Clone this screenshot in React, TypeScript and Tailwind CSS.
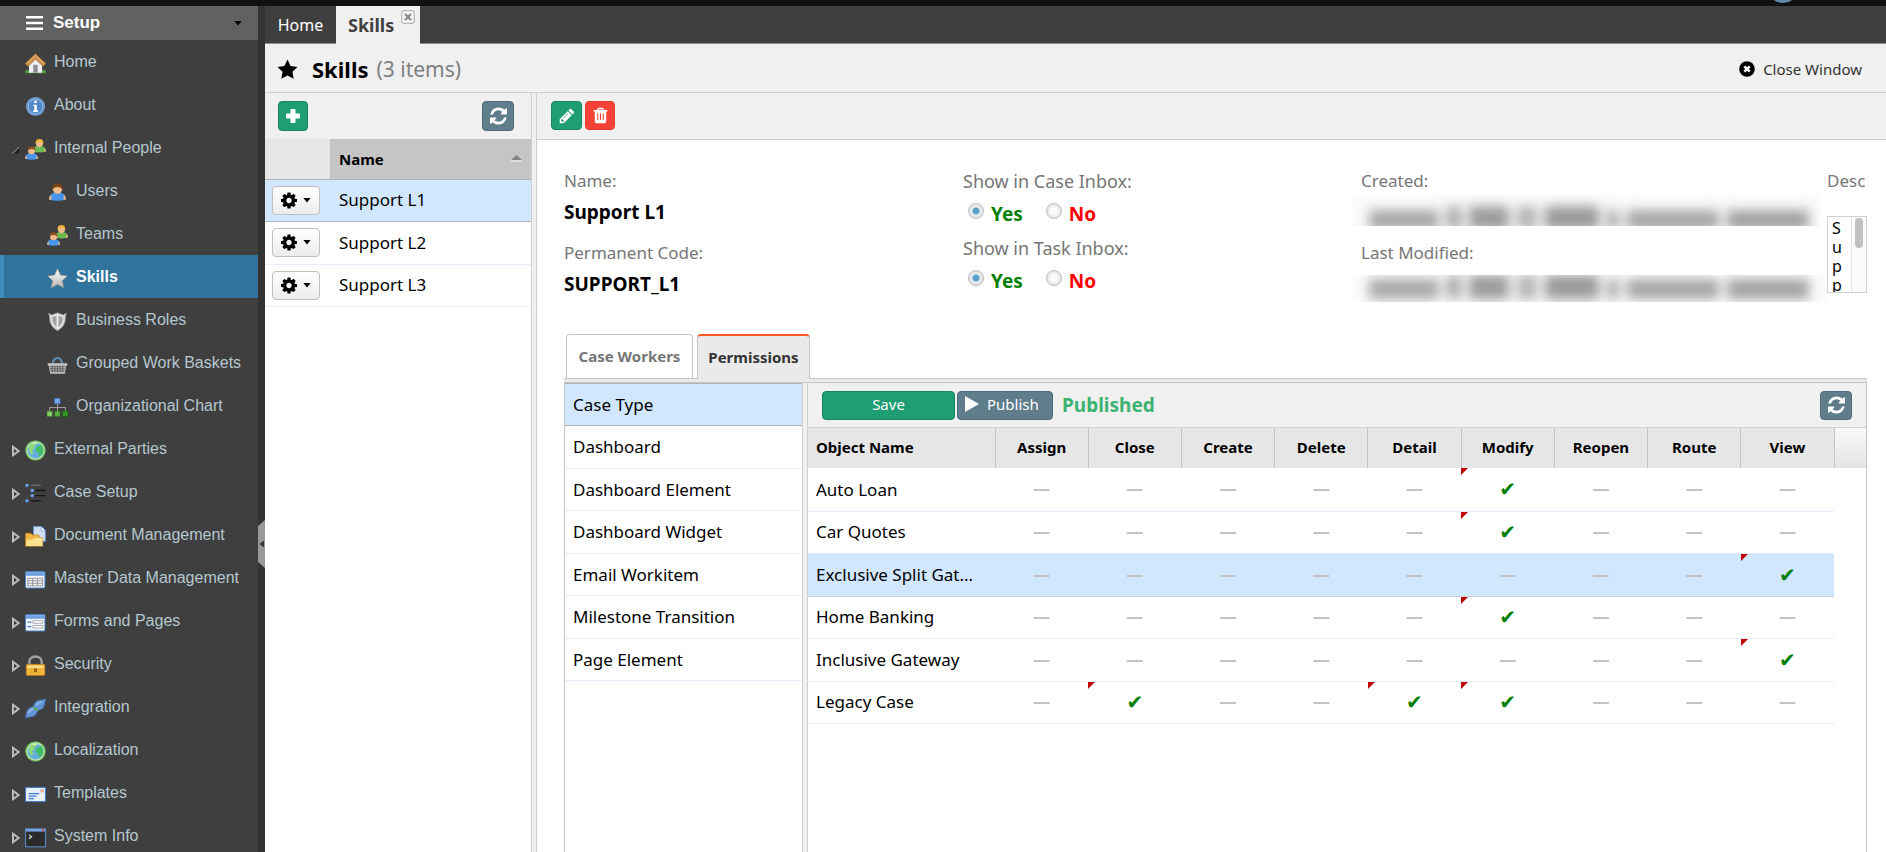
import type { ReactNode } from 'react';
import clsx from 'clsx';

type IconProps = { className?: string };

/* ---------- glyph icons ---------- */

const RefreshIcon = ({ className }: IconProps) => (
  <svg viewBox="0 0 1536 1792" className={className} fill="currentColor" aria-hidden="true">
    <path d="M1511 1056q0 5-1 7-64 268-268 434.500t-478 166.500q-146 0-282.500-55t-243.500-157l-129 129q-19 19-45 19t-45-19-19-45v-448q0-26 19-45t45-19h448q26 0 45 19t19 45-19 45l-137 137q71 66 161 102t187 36q134 0 250-65t186-179q11-17 53-117 8-23 30-23h192q13 0 22.500 9.500t9.500 22.500zM1536 256v448q0 26-19 45t-45 19h-448q-26 0-45-19t-19-45 19-45l138-138q-148-137-349-137-134 0-250 65t-186 179q-11 17-53 117-8 23-30 23h-199q-13 0-22.500-9.500t-9.500-22.500v-7q65-268 270-434.500t480-166.500q146 0 284 55.500t245 156.500l130-129q19-19 45-19t45 19 19 45z" />
  </svg>
);

const CogIcon = ({ className }: IconProps) => (
  <svg viewBox="0 0 1536 1792" className={className} fill="currentColor" aria-hidden="true">
    <path d="M1024 896q0-106-75-181t-181-75-181 75-75 181 75 181 181 75 181-75 75-181zm512-109v222q0 12-8 23t-20 13l-185 28q-19 54-39 91 35 50 107 138 10 12 10 25t-9 23q-27 37-99 108t-94 71q-12 0-26-9l-138-108q-44 23-91 38-16 136-29 186-7 28-36 28h-222q-14 0-24.500-8.500t-11.500-21.500l-28-184q-49-16-90-37l-141 107q-10 9-25 9-14 0-25-11-126-114-165-168-7-10-7-23 0-12 8-23 15-21 51-66.500t54-70.500q-27-50-41-99l-183-27q-13-2-21-12.500t-8-23.500v-222q0-12 8-23t19-13l186-28q14-46 39-92-40-57-107-138-10-12-10-24 0-10 9-23 26-36 98.500-107.500t94.500-71.500q13 0 26 10l138 107q44-23 91-38 16-136 29-186 7-28 36-28h222q14 0 24.500 8.500t11.500 21.500l28 184q49 16 90 37l142-107q9-9 24-9 13 0 25 10 129 119 165 170 7 8 7 22 0 12-8 23-15 21-51 66.500t-54 70.500q26 50 41 98l183 28q13 2 21 12.500t8 23.500z" />
  </svg>
);

const StarIcon = ({ className }: IconProps) => (
  <svg viewBox="0 0 20 20" className={className} fill="currentColor" aria-hidden="true">
    <path d="M10 .5l2.900 6.100 6.600.9-4.800 4.700 1.200 6.700L10 15.700l-5.900 3.200 1.200-6.700L.5 7.500l6.600-.9z" />
  </svg>
);

const PlusIcon = ({ className }: IconProps) => (
  <svg viewBox="0 0 16 16" className={className} fill="currentColor" aria-hidden="true">
    <path d="M6.200 1h3.600q.7 0 .7.700v3.800h3.800q.7 0 .7.700v3.600q0 .7-.7.700h-3.800v3.800q0 .7-.7.700H6.200q-.7 0-.7-.7v-3.800H1.700q-.7 0-.7-.7V6.200q0-.7.700-.7h3.800V1.700q0-.7.700-.7z" />
  </svg>
);

const PencilIcon = ({ className }: IconProps) => (
  <svg viewBox="0 0 16 16" className={className} fill="currentColor" aria-hidden="true">
    <path d="M10.900 1.100q.7-.7 1.400 0l2.600 2.600q.7.700 0 1.400l-1.500 1.500-4-4zM8.700 3.300l4 4L4.700 15.300H.7v-4zM2 11.900v1h1.100V14h1l.9-.9L2.900 11zm6.600-6.400L3.900 10.200l.4.400L9 5.900z" fillRule="evenodd" />
  </svg>
);

const TrashIcon = ({ className }: IconProps) => (
  <svg viewBox="0 0 16 16" className={className} fill="currentColor" fillRule="evenodd" aria-hidden="true">
    <path d="M6 .8h4q.6 0 .8.500l.6 1.500h3.100v1.400h-1.100v9.300q0 1.700-1.300 1.700H3.900q-1.300 0-1.300-1.700V4.200H1.500V2.800h3.100l.6-1.500Q5.400.8 6 .8zm.3 1.200l-.4.800h4.200l-.4-.8zM4.900 5.900v6.400h1V5.900zm2.600 0v6.400h1V5.900zm2.600 0v6.400h1V5.900z" />
  </svg>
);

const CloseCircleIcon = ({ className }: IconProps) => (
  <svg viewBox="0 0 16 16" className={className} aria-hidden="true">
    <circle cx="8" cy="8" r="7.800" fill="currentColor" />
    <path d="M5.300 5.300l5.400 5.400M10.700 5.300l-5.400 5.400" stroke="#fff" strokeWidth="2.600" />
  </svg>
);

const Caret = ({ className }: IconProps) => (
  <svg viewBox="0 0 8 5" className={className} fill="currentColor" aria-hidden="true">
    <path d="M.4 0h7.200L4 4.600z" />
  </svg>
);

/* ---------- sidebar pictograms ---------- */

const Pic = ({ children }: { children: ReactNode }) => (
  <svg viewBox="0 0 16 16" className="size-[21px] shrink-0" aria-hidden="true">
    {children}
  </svg>
);

const HouseIcon = () => (
  <Pic>
    <rect x="0" y="13" width="16" height="2.500" rx="1" fill="#4f9a3d" />
    <path d="M3 8l5-5 5 5v7H3z" fill="#eef0f2" />
    <rect x="6.300" y="9" width="3.400" height="6" fill="#8b8f94" />
    <path d="M8 .5L15.900 8l-2 2.200L8 4.800l-5.900 5.400L.1 8z" fill="#d0924f" stroke="#9a6026" strokeWidth=".5" />
    <path d="M1.400 7.900L8 1.700l6.600 6.200" fill="none" stroke="#e8bd86" strokeWidth=".7" />
  </Pic>
);

const InfoIcon = () => (
  <Pic>
    <circle cx="8" cy="8" r="6.700" fill="#4f87c7" stroke="#79a5db" strokeWidth="1" />
    <circle cx="8" cy="8" r="5.500" fill="none" stroke="#a9c7ea" strokeWidth=".6" />
    <path d="M7 3.600h2v1.700H7zM6.300 6.600H9v4.300h.9v1.200H6.200v-1.200h.9V7.700h-.8z" fill="#fff" />
  </Pic>
);

const Person = ({ x, y, hair, shirt }: { x: number; y: number; hair: string; shirt: string }) => (
  <g transform={`translate(${x} ${y})`}>
    <path d="M0 9.500Q.3 6 3 5.600h4Q9.700 6 10 9.500 5 11 0 9.500z" fill={shirt} />
    <path d="M0 9.500Q0 7.500 1.400 7v2.800zM10 9.500Q10 7.500 8.600 7v2.800z" fill="#eab27a" />
    <circle cx="5" cy="3.500" r="2.700" fill="#efbd8c" />
    <path d="M2 3.600Q1.800 0 5 0t3 3.600Q6.800 2 5 2.100 3.200 2 2 3.600z" fill={hair} />
  </g>
);

const UserIcon = () => (
  <Pic>
    <g transform="translate(1.500 1) scale(1.300)">
      <Person x={0} y={0} hair="#7c4214" shirt="#4795ee" />
    </g>
  </Pic>
);

const PeopleIcon = () => (
  <Pic>
    <Person x={6} y={0} hair="#f0b53a" shirt="#6cbb50" />
    <Person x={0} y={5.500} hair="#8d4e23" shirt="#4795ee" />
  </Pic>
);

const SilverStarIcon = () => (
  <Pic>
    <defs>
      <linearGradient id="silver" x1="0" y1="0" x2="0" y2="1">
        <stop offset="0" stopColor="#fff" />
        <stop offset="1" stopColor="#b5b5b5" />
      </linearGradient>
    </defs>
    <path d="M8 .5l2.300 4.900 5.300.6-3.900 3.700 1.200 5.600L8 12.500l-4.900 2.800 1.200-5.600L.4 6l5.300-.6z" fill="url(#silver)" stroke="#8b8b8b" strokeWidth=".5" />
  </Pic>
);

const ShieldIcon = () => (
  <Pic>
    <path d="M1.300 1.500L3.500 3 8 1.400 12.500 3l2.200-1.500-.6 3.200q.2 7-6.100 10.300Q1.700 11.700 1.900 4.700z" fill="#dedede" stroke="#909090" strokeWidth=".6" />
    <path d="M8 3.500l4 1.200q0 5.300-4 7.900-4-2.600-4-7.900z" fill="#a3a3a3" />
    <path d="M8 3v10" stroke="#f5f5f5" strokeWidth="1.300" />
  </Pic>
);

const BasketIcon = () => (
  <Pic>
    <path d="M4.300 8Q4.800 3 8 3t3.700 5" fill="none" stroke="#5f8fb8" strokeWidth="1.500" />
    <path d="M.5 7h15v1.800h-.8L13.600 15H2.400L1.300 8.800H.5z" fill="#c4c4c4" />
    <path d="M2 9.700h12M2.200 11.300h11.600M2.500 12.900h11M4 8.800V14M6 8.800V14M8 8.800V14M10 8.800V14M12 8.800V14" stroke="#555" strokeWidth=".7" />
  </Pic>
);

const OrgIcon = () => (
  <Pic>
    <path d="M8 5v3M2 10.500V8h12v2.500M8 8v2.500" fill="none" stroke="#9c9c9c" strokeWidth=".8" />
    <rect x="5.800" y="1" width="4.200" height="4.200" fill="#73a7ea" stroke="#3a6cb8" strokeWidth=".4" />
    <rect x="0" y="10.800" width="3.900" height="3.900" fill="#86d06c" stroke="#3c8a2a" strokeWidth=".5" />
    <rect x="6" y="10.800" width="3.900" height="3.900" fill="#58b041" stroke="#2c7a1c" strokeWidth=".5" />
    <rect x="12" y="10.800" width="3.900" height="3.900" fill="#2f9e22" stroke="#1c6a12" strokeWidth=".5" />
  </Pic>
);

const GlobeIcon = () => (
  <Pic>
    <circle cx="8" cy="8" r="7.900" fill="#5fae4c" />
    <circle cx="8" cy="8" r="7" fill="#bfe6ae" />
    <circle cx="8" cy="8" r="6" fill="#64aede" />
    <path d="M3 4.600Q5 2 8.300 2l.8 1.600-2 1.200.3 1.800-2 .8 1 2.400-1.300 1.500Q2.300 9 3 4.600z" fill="#8fd87a" />
    <path d="M9.400 5.200l3.200-1.600q2.200 3.700.5 7.300l-2.400 1.700-.6-2.900-2-.9.200-2.200z" fill="#3fbf63" />
    <path d="M5 3.200Q7.500 1.400 10.500 2.500 8 3 5 3.200z" fill="#e6f8df" />
  </Pic>
);

const TreeListIcon = () => (
  <Pic>
    <g fill="#6fa3ec">
      <circle cx="1.500" cy="1.800" r="1.300" />
      <circle cx="5.500" cy="5.700" r="1.300" />
      <circle cx="5.500" cy="9.600" r="1.300" />
      <circle cx="1.500" cy="13.600" r="1.300" />
    </g>
    <path d="M4.500 1.800H12" stroke="#707070" />
    <path d="M8 5.700h7.500M8 9.600h7.500M4.500 13.600H12" stroke="#141414" />
  </Pic>
);

const FolderDocIcon = () => (
  <Pic>
    <path d="M6.500.4h6l3 3v8.200h-9z" fill="#cfe0f7" stroke="#6d95cf" strokeWidth=".7" />
    <path d="M12.300.6v3h3" fill="#fff" stroke="#6d95cf" strokeWidth=".5" />
    <path d="M.4 15.400V5.600h4.200l1 1.300h5v2h2.800v6.500z" fill="#f1b743" stroke="#c98516" strokeWidth=".5" />
    <path d="M.8 15.200V10.500l5-.2 1-1.200h6.600v6.100z" fill="#fbe08e" />
  </Pic>
);

const WindowFrame = () => (
  <>
    <rect x=".4" y="2" width="14.800" height="12.400" rx=".8" fill="#f3f6fb" stroke="#4c80c4" strokeWidth=".8" />
    <path d="M.8 2.400h14v2.800H.8z" fill="#6fa0df" />
  </>
);

const TableIcon = () => (
  <Pic>
    <WindowFrame />
    <path d="M2 7h11.700M2 8.900h11.700M2 10.800h11.700M2 12.700h11.700M2.200 6.600v6.500M5.800 6.600v6.500M9.500 6.600v6.500M13.400 6.600v6.500" stroke="#9a9a9a" strokeWidth=".8" />
  </Pic>
);

const FormIcon = () => (
  <Pic>
    <WindowFrame />
    <path d="M2 7.700h2.800M2 11.200h2.800" stroke="#4677c6" strokeWidth="1" />
    <path d="M6 6.600h7.500v2H6zM6 10.200h7.500v2H6z" fill="#fff" stroke="#a5a5a5" strokeWidth=".7" />
  </Pic>
);

const LockIcon = () => (
  <Pic>
    <path d="M3.300 8V5.200Q3.600 1.300 8 1.200q4.400.1 4.700 4V8" fill="none" stroke="#9d9d9d" strokeWidth="1.900" />
    <rect x="1" y="7.200" width="14" height="8.300" rx=".6" fill="#f4b83c" stroke="#d08b14" strokeWidth=".6" />
    <path d="M1.700 8h12.600v2H1.700z" fill="#fbdc86" />
    <path d="M4 11h8M4 13h8" stroke="#d99a26" strokeWidth=".6" />
    <rect x="6.900" y="10.200" width="2.200" height="2.800" fill="#97640d" />
  </Pic>
);

const PlugIcon = () => (
  <Pic>
    <path d="M.2 15.800L1 11.500Q1.700 7.800 4.500 7L6.300 6.300Q7.500 2.500 10.500 1.800L14.500 1.200 15.900.1 15 4.500Q14.300 8.200 11.500 9L9.700 9.700Q8.500 13.500 5.500 14.200L1.600 14.800z" fill="#6395d6" stroke="#3c69aa" strokeWidth=".5" />
    <path d="M2.500 11.500Q3.500 9 6.500 8.500M8.500 5.500Q10 3.500 13 3" stroke="#a3c3ed" fill="none" strokeWidth="1" />
    <path d="M6 6.700l4 3" stroke="#5fae4c" strokeWidth="1.200" />
  </Pic>
);

const TemplateIcon = () => (
  <Pic>
    <rect x=".4" y="2.600" width="15.200" height="10.800" fill="#e7effb" stroke="#3f79c9" strokeWidth=".8" />
    <rect x="11.800" y="4" width="2.600" height="2.400" fill="#f1a9a4" />
    <path d="M2.800 7.300h8M2.800 9.200h6M2.800 11.100h4" stroke="#3f79c9" strokeWidth="1" />
  </Pic>
);

const ConsoleIcon = () => (
  <Pic>
    <rect x=".4" y="1.400" width="15.200" height="13.700" fill="#2b2b2b" stroke="#5a8cd0" strokeWidth=".8" />
    <path d="M.8 1.500h14.400v2H.8z" fill="#7aa7e2" />
    <rect x="13" y="1.800" width="1.600" height="1.200" fill="#d9453a" />
    <path d="M3 6l2 1.500L3 9" fill="none" stroke="#e2e2e2" strokeWidth=".9" />
  </Pic>
);

/* ---------- data ---------- */

type NavItem = { label: string; icon: () => ReactNode; child?: boolean; active?: boolean; state?: 'open' | 'closed' };

const navItems: NavItem[] = [
  { label: 'Home', icon: HouseIcon },
  { label: 'About', icon: InfoIcon },
  { label: 'Internal People', icon: PeopleIcon, state: 'open' },
  { label: 'Users', icon: UserIcon, child: true },
  { label: 'Teams', icon: PeopleIcon, child: true },
  { label: 'Skills', icon: SilverStarIcon, child: true, active: true },
  { label: 'Business Roles', icon: ShieldIcon, child: true },
  { label: 'Grouped Work Baskets', icon: BasketIcon, child: true },
  { label: 'Organizational Chart', icon: OrgIcon, child: true },
  { label: 'External Parties', icon: GlobeIcon, state: 'closed' },
  { label: 'Case Setup', icon: TreeListIcon, state: 'closed' },
  { label: 'Document Management', icon: FolderDocIcon, state: 'closed' },
  { label: 'Master Data Management', icon: TableIcon, state: 'closed' },
  { label: 'Forms and Pages', icon: FormIcon, state: 'closed' },
  { label: 'Security', icon: LockIcon, state: 'closed' },
  { label: 'Integration', icon: PlugIcon, state: 'closed' },
  { label: 'Localization', icon: GlobeIcon, state: 'closed' },
  { label: 'Templates', icon: TemplateIcon, state: 'closed' },
  { label: 'System Info', icon: ConsoleIcon, state: 'closed' },
];

const skills = ['Support L1', 'Support L2', 'Support L3'];

const objectTypes = [
  'Case Type',
  'Dashboard',
  'Dashboard Element',
  'Dashboard Widget',
  'Email Workitem',
  'Milestone Transition',
  'Page Element',
];

const actions = ['Assign', 'Close', 'Create', 'Delete', 'Detail', 'Modify', 'Reopen', 'Route', 'View'];

const permissions = [
  { name: 'Auto Loan', granted: ['Modify'] },
  { name: 'Car Quotes', granted: ['Modify'] },
  { name: 'Exclusive Split Gat...', granted: ['View'], selected: true },
  { name: 'Home Banking', granted: ['Modify'] },
  { name: 'Inclusive Gateway', granted: ['View'] },
  { name: 'Legacy Case', granted: ['Close', 'Detail', 'Modify'] },
];

/* ---------- pieces ---------- */

function Sidebar() {
  return (
    <nav className="w-[258px] shrink-0 bg-[#3f3f3f] font-['Liberation_Sans',Arial,sans-serif] text-base text-[#b5c7cf]">
      <button className="flex h-[34px] w-full items-center bg-[#616161] pl-[26px] pr-4 text-left text-[17px] font-bold text-white">
        <svg viewBox="0 0 17 14" className="h-[14px] w-[17px]" fill="currentColor" aria-hidden="true">
          <path d="M0 0h17v2.600H0zM0 5.700h17v2.600H0zM0 11.400h17V14H0z" />
        </svg>
        <span className="ml-[10px] flex-1">Setup</span>
        <Caret className="h-[5px] w-2 text-black" />
      </button>
      <ul>
        {navItems.map(({ label, icon: Icon, child, active, state }) => (
          <li key={label}>
            <a
              href="#"
              className={clsx(
                'flex h-[43px] items-center border-l-4',
                active ? 'border-[#3c8dbc] bg-[#30739c] font-bold text-white' : 'border-transparent',
                child ? 'pl-[43px]' : 'pl-2',
              )}
            >
              {!child && (
                <span className="w-[13px] pt-1">
                  {state === 'closed' && (
                    <svg viewBox="0 0 8 12" className="h-3 w-2" aria-hidden="true">
                      <path d="M1 1.800v8.400L6.600 6z" fill="#3a3a3a" stroke="#bdbdbd" strokeWidth="2" />
                    </svg>
                  )}
                  {state === 'open' && (
                    <svg viewBox="0 0 8 8" className="size-2" aria-hidden="true">
                      <path d="M.6 7.400h6.500V1z" fill="#222" />
                      <path d="M.6 7.400L7.100 1" stroke="#aaa" />
                    </svg>
                  )}
                </span>
              )}
              <span className="pt-[3px]">
                <Icon />
              </span>
              <span className="ml-2">{label}</span>
            </a>
          </li>
        ))}
      </ul>
    </nav>
  );
}

function InboxChoice({ label, name }: { label: string; name: string }) {
  const radio =
    'mr-[7px] mb-[6px] size-4 appearance-none rounded-full border border-[#bdbdbd] bg-[radial-gradient(circle,#fafafa_30%,#d4d4d4)] checked:bg-[radial-gradient(circle,#5b9fc9_28%,#e8eef2_42%,#d4d4d4)]';
  return (
    <fieldset className="h-[67px]">
      <legend className="text-lg leading-6 text-[#767676]">{label}</legend>
      <div className="flex gap-[23px] pt-[9px] pl-[5px] text-[19px] leading-6 font-bold">
        <label className="flex items-center text-[#008000]">
          <input type="radio" name={name} defaultChecked className={radio} />
          Yes
        </label>
        <label className="flex items-center text-[#ff0000]">
          <input type="radio" name={name} className={radio} />
          No
        </label>
      </div>
    </fieldset>
  );
}

// Audit values are masked, only smudges of the words stay visible
function MaskedValue({ className }: IconProps) {
  return (
    <div className={clsx('-ml-[9px] flex overflow-hidden bg-[#fbfbfb]', className)} aria-hidden="true">
      <div className="flex gap-2 pl-[17px] blur-[6px]">
        <div className="mt-1 h-5 w-[70px] bg-[#a8a8a8]" />
        <div className="h-6 w-[14px] bg-[#a8a8a8]" />
        <div className="h-6 w-10 bg-[#9c9c9c]" />
        <div className="h-6 w-5 bg-[#b5b5b5]" />
        <div className="h-6 w-[54px] bg-[#9a9a9a]" />
        <div className="mt-1 h-5 w-3 bg-[#aaa]" />
        <div className="mt-1 h-5 w-[92px] bg-[#a6a6a6]" />
        <div className="mt-1 h-5 w-[82px] bg-[#a2a2a2]" />
      </div>
    </div>
  );
}

function SkillDetails() {
  return (
    <section className="grid grid-cols-[399fr_398fr_466fr_40fr] pt-[29px] pr-[19px] pl-[27px] text-[17px]">
      <dl className="min-w-0">
        <dt className="leading-6 text-[#767676]">Name:</dt>
        <dd className="pt-[7px] text-[19px] leading-6 font-bold">Support L1</dd>
        <dt className="pt-[17px] leading-6 text-[#767676]">Permanent Code:</dt>
        <dd className="pt-[7px] text-[19px] leading-6 font-bold">SUPPORT_L1</dd>
      </dl>
      <div className="min-w-0">
        <InboxChoice label="Show in Case Inbox:" name="case-inbox" />
        <InboxChoice label="Show in Task Inbox:" name="task-inbox" />
      </div>
      <div className="min-w-0">
        <div className="leading-6 text-[#767676]">Created:</div>
        <MaskedValue className="mt-[2px] h-[31px] w-[468px] pt-[11px]" />
        <div className="mt-[15px] leading-6 text-[#767676]">Last Modified:</div>
        <MaskedValue className="mt-[10px] h-[27px]" />
      </div>
      <div className="min-w-0">
        <label htmlFor="description" className="block leading-6 text-[#767676]">
          Desc
        </label>
        <div className="relative mt-[23px]">
          <textarea
            id="description"
            readOnly
            defaultValue="Support L1"
            className="block h-[77px] w-full resize-none overflow-hidden border border-[#d0d0d0] pt-[2px] pr-[19px] pl-1 text-base leading-[19px] break-all"
          />
          <span className="absolute inset-y-px right-px w-[15px] border-l border-[#e4e4e4] bg-[#fafafa] pt-px pl-[3px]">
            <span className="block h-[30px] w-2 rounded-full bg-[#c1c1c1]" />
          </span>
        </div>
      </div>
    </section>
  );
}

function PermissionsPanel() {
  return (
    <div className="min-w-0 flex-1 bg-white">
      <div className="flex h-[45px] items-center border-b border-[#d0d0d0] bg-[#f0f0f0] pr-[14px] pl-[14px]">
        <button className="h-[29px] w-[133px] rounded border border-[#178560] bg-[#1f9d74] pb-[2px] text-[15px] leading-5 text-white">Save</button>
        <button className="ml-[2px] flex h-[29px] w-24 items-center rounded border border-[#4d6c7a] bg-[#607d8b] pb-[2px] pl-[7px] text-[15px] leading-5 text-white">
          <svg viewBox="0 0 14 16" className="mr-2 h-4 w-[14px]" fill="currentColor" aria-hidden="true">
            <path d="M0 0l14 8L0 16z" />
          </svg>
          Publish
        </button>
        <strong className="ml-[9px] flex-1 text-[19px] text-[#3cb371]">Published</strong>
        <button aria-label="Refresh permissions" className="flex h-[29px] w-8 items-center justify-center rounded border border-[#4d6c7a] bg-[#607d8b] text-white">
          <RefreshIcon className="h-5 w-[17px]" />
        </button>
      </div>
      <table className="w-full table-fixed border-collapse">
        <colgroup>
          <col className="w-[187px]" />
          {actions.map((a) => (
            <col key={a} />
          ))}
          <col className="w-8" />
        </colgroup>
        <thead>
          <tr className="h-10 bg-[#e6e6e6] text-[15px]">
            <th className="border-r border-[#c5c5c5] pb-[2px] pl-2 text-left font-bold">Object Name</th>
            {actions.map((a) => (
              <th key={a} className="border-r border-[#c5c5c5] pb-[2px] font-bold">
                {a}
              </th>
            ))}
            <td className="bg-linear-to-b from-[#f9f9f9] to-[#e3e4e6]" />
          </tr>
        </thead>
        <tbody>
          {permissions.map((row) => (
            <tr key={row.name} className="text-[17px] odd:h-[43px] even:h-[42px]">
              <td
                className={clsx(
                  'border-b pl-2 whitespace-nowrap',
                  row.selected ? 'border-t border-b-[#d0d0d0] border-t-[#b5b5b5] bg-[#d0e7ff]' : 'border-[#e2eefa]',
                )}
              >
                {row.name}
              </td>
              {actions.map((a) => {
                const granted = row.granted.includes(a);
                return (
                  <td
                    key={a}
                    className={clsx(
                      'relative border-b text-center leading-6',
                      row.selected ? 'border-t border-b-[#d0d0d0] border-t-[#b5b5b5] bg-[#d0e7ff]' : 'border-[#e2eefa]',
                      granted ? "font-['DejaVu_Sans',sans-serif] text-xl leading-6 text-[#008000]" : 'font-bold text-[#c3c3c3]',
                    )}
                  >
                    {granted && (
                      <svg viewBox="0 0 7 7" className="absolute top-0 left-0 size-[7px]" aria-hidden="true">
                        <path d="M0 0h7L0 7z" fill="#c00000" />
                      </svg>
                    )}
                    {granted ? '✔' : '—'}
                  </td>
                );
              })}
            </tr>
          ))}
        </tbody>
      </table>
    </div>
  );
}

export default function App() {
  return (
    <div className="flex h-screen flex-col overflow-hidden bg-white font-['Noto_Sans',Tahoma,sans-serif] text-[17px] text-black">
      <div className="flex h-[6px] shrink-0 justify-end overflow-hidden bg-[#111]">
        <div className="-mt-[29px] mr-[87px] size-8 rounded-full bg-[#5f8aa8]" />
      </div>

      <div className="flex min-h-0 flex-1">
        <Sidebar />
        <div className="flex w-[7px] shrink-0 items-start bg-[#333]">
          <button aria-label="Collapse sidebar" className="mt-[514px]">
            <svg viewBox="0 0 7 48" className="h-12 w-[7px]" aria-hidden="true">
              <path d="M0 6l7-6v48l-7-6z" fill="#999" />
              <path d="M1.500 24L6 20.500v7z" fill="#333" />
            </svg>
          </button>
        </div>

        <div className="flex min-w-0 flex-1 flex-col">
          {/* Window tabs */}
          <div className="flex h-[38px] shrink-0 border-b border-[#8b8b8b] bg-[#3f3f3f]">
            <button className="w-[71px] text-center text-base text-white">Home</button>
            <div className="-mb-px flex h-[38px] w-[84px] bg-[#f0f0f0] pl-3">
              <button className="text-lg font-bold text-[#3f3f3f]">Skills</button>
              <button aria-label="Close Skills tab" className="mt-1 ml-[7px] size-[14px]">
                <svg viewBox="0 0 14 14" className="size-[14px]" aria-hidden="true">
                  <rect x=".7" y=".7" width="12.600" height="12.600" rx="2.500" fill="#f4f4f4" stroke="#b5b5b5" strokeWidth="1.200" />
                  <path d="M4 4l6 6M10 4l-6 6" stroke="#8a8a8a" strokeWidth="2.200" />
                </svg>
              </button>
            </div>
          </div>

          {/* Title */}
          <header className="flex h-[49px] shrink-0 items-center border-b border-[#cfcfcf] bg-[#f0f0f0] pt-[2px] pr-6 pl-3">
            <StarIcon className="size-[21px]" />
            <h1 className="ml-[14px] text-[22px] leading-7 font-bold">Skills</h1>
            <span className="ml-2 flex-1 text-[21px] leading-7 text-[#808080]">(3 items)</span>
            <button className="flex items-center gap-2 text-[15px] text-[#333]">
              <CloseCircleIcon className="size-4 text-black" />
              Close Window
            </button>
          </header>

          <div className="flex min-h-0 flex-1">
            {/* Skill list */}
            <aside className="w-[266px] shrink-0">
              <div className="flex h-[46px] items-center justify-between bg-[#f0f0f0] pr-[17px] pb-px pl-[13px]">
                <button aria-label="Add skill" className="flex size-[30px] items-center justify-center rounded border border-[#178560] bg-[#1f9d74] text-white">
                  <PlusIcon className="size-4" />
                </button>
                <button aria-label="Refresh skills" className="flex h-[30px] w-8 items-center justify-center rounded border border-[#4d6c7a] bg-[#607d8b] text-white">
                  <RefreshIcon className="h-5 w-[17px]" />
                </button>
              </div>
              <table className="w-full table-fixed border-collapse">
                <thead>
                  <tr className="h-10 border-b border-[#b5b5b5] text-[15px]">
                    <td className="w-[65px] bg-[#e6e6e6]" />
                    <th className="bg-[#c5c5c5] pr-[9px] pl-[9px] font-bold">
                      <span className="flex items-center justify-between">
                        Name
                        <svg viewBox="0 0 11 7" className="h-[7px] w-[11px]" aria-hidden="true">
                          <path d="M5.500 0L11 5H0z" fill="#848484" />
                          <path d="M0 6h11" stroke="#f5f5f5" />
                        </svg>
                      </span>
                    </th>
                  </tr>
                </thead>
                <tbody>
                  {skills.map((skill, i) => (
                    <tr key={skill} className={clsx('border-b odd:h-[42px] even:h-[43px]', i === 0 ? 'border-[#b5b5b5] bg-[#d0e7ff]' : 'border-[#e2eefa]')}>
                      <td className="pl-[7px]">
                        <button
                          aria-label={`${skill} actions`}
                          className="flex h-[29px] w-12 items-center justify-center gap-[6px] rounded border border-[#c0c0c0] bg-linear-to-b from-white to-[#ececec]"
                        >
                          <CogIcon className="h-[19px] w-4" />
                          <Caret className="h-[5px] w-2" />
                        </button>
                      </td>
                      <td className="pl-[9px]">{skill}</td>
                    </tr>
                  ))}
                </tbody>
              </table>
            </aside>

            <div className="w-[6px] shrink-0 border-x border-[#cfcfcf] bg-[#f0f0f0]" />

            {/* Selected skill */}
            <main className="flex min-w-0 flex-1 flex-col">
              <div className="flex h-[47px] shrink-0 items-center gap-[3px] border-b border-[#cfcfcf] bg-[#f0f0f0] pb-px pl-[14px]">
                <button aria-label="Edit" className="flex h-[29px] w-[31px] items-center justify-center rounded border border-[#178560] bg-[#1f9d74] text-white">
                  <PencilIcon className="size-4" />
                </button>
                <button aria-label="Delete" className="flex h-[29px] w-[30px] items-center justify-center rounded border border-[#e53b30] bg-[#f44336] text-white">
                  <TrashIcon className="size-[17px]" />
                </button>
              </div>

              <SkillDetails />

              <div className="mt-[31px] mr-[19px] ml-[27px] flex min-h-0 flex-1 flex-col">
                <div role="tablist" className="flex h-[45px] shrink-0 gap-1 border-b border-[#c5c5c5] pl-[2px] text-[15px] font-bold">
                  <button role="tab" aria-selected="false" className="h-11 w-[127px] rounded-t border border-b-0 border-[#c5c5c5] text-[#767676]">
                    Case Workers
                  </button>
                  <button role="tab" aria-selected="true" className="h-[45px] w-[113px] rounded-t border border-t-2 border-b-0 border-[#c5c5c5] border-t-[#ff5722] bg-[#eaeaea] text-[#333]">
                    Permissions
                  </button>
                </div>
                <div className="h-1 shrink-0 border-b border-[#c5c5c5] bg-[#eaeaea]" />
                <div className="flex min-h-0 flex-1 border-x border-[#c5c5c5]">
                  <ul className="w-[237px] shrink-0 border-t border-[#b5b5b5]">
                    {objectTypes.map((type, i) => (
                      <li
                        key={type}
                        className={clsx('flex items-center border-b pl-2 odd:h-[42px] even:h-[43px]', i === 0 ? 'border-[#b5b5b5] bg-[#d0e7ff]' : 'border-[#e2eefa]')}
                      >
                        {type}
                      </li>
                    ))}
                  </ul>
                  <div className="w-[6px] shrink-0 border-x border-[#cfcfcf] bg-[#f0f0f0]" />
                  <PermissionsPanel />
                </div>
              </div>
            </main>
          </div>
        </div>
      </div>
    </div>
  );
}
